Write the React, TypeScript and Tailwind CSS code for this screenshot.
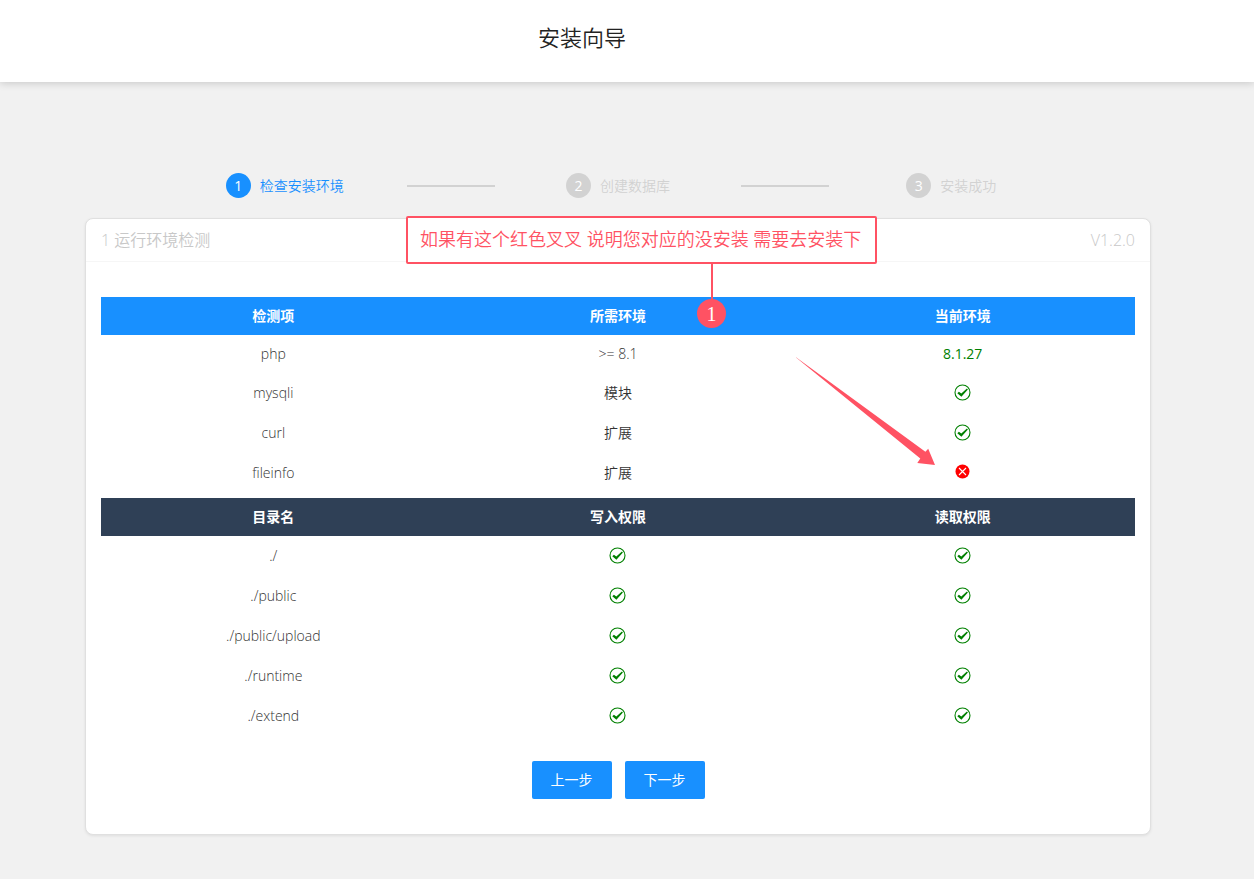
import { Fragment } from "react";
import type { ReactNode } from "react";
import clsx from "clsx";

interface EnvRow {
  name: string;
  required: string;
  current: string | boolean;
}

interface CheckTableProps {
  heads: string[];
  headClass: string;
  bodyClass?: string;
  rows: { key: string; cells: ReactNode[] }[];
}

const steps = ["检查安装环境", "创建数据库", "安装成功"];

const envRows: EnvRow[] = [
  { name: "php", required: ">= 8.1", current: "8.1.27" },
  { name: "mysqli", required: "模块", current: true },
  { name: "curl", required: "扩展", current: true },
  { name: "fileinfo", required: "扩展", current: false },
];

const dirs = ["./", "./public", "./public/upload", "./runtime", "./extend"];

function OkIcon() {
  return (
    <svg
      role="img"
      aria-label="ok"
      viewBox="0 0 18 18"
      className="mx-auto block h-[18px] w-[18px] text-[#008000]"
      fill="none"
      stroke="currentColor"
    >
      <circle cx="8.5" cy="8.5" r="7.5" strokeWidth="1.1" />
      <path d="M3.3 9.2 4.9 7.8 7.3 9.6 12.9 4.4 13.9 5.5 7.4 12.7Z" fill="currentColor" stroke="none" />
    </svg>
  );
}

function FailIcon() {
  return (
    <svg
      role="img"
      aria-label="fail"
      viewBox="0 0 18 18"
      className="mx-auto block h-[18px] w-[18px]"
    >
      <circle cx="8.5" cy="7.5" r="7" fill="#ff0000" />
      <path d="M5 4l7 7M12 4l-7 7" stroke="#fff" strokeWidth="1.1" />
    </svg>
  );
}

function StatusCell({ value }: { value: string | boolean }) {
  if (typeof value === "string") {
    return <span className="font-normal text-[#008000]">{value}</span>;
  }
  return value ? <OkIcon /> : <FailIcon />;
}

function CheckTable({ heads, headClass, bodyClass, rows }: CheckTableProps) {
  return (
    <table className="w-full table-fixed text-center text-sm text-[#333]">
      <thead>
        <tr className={clsx("h-[38px] text-white", headClass)}>
          {heads.map((head) => (
            <th key={head} className="p-0 font-bold">
              {head}
            </th>
          ))}
        </tr>
      </thead>
      <tbody className={bodyClass}>
        {rows.map((row) => (
          <tr key={row.key} className="h-10">
            {row.cells.map((cell, i) => (
              <td key={i} className="p-0 font-[350]">
                {cell}
              </td>
            ))}
          </tr>
        ))}
      </tbody>
    </table>
  );
}

function Steps({ active }: { active: number }) {
  return (
    <ol className="flex items-center px-[77px] text-sm">
      {steps.map((label, i) => (
        <Fragment key={label}>
          {i > 0 && <li aria-hidden className="h-0.5 w-[88px] bg-[#d2d2d2]" />}
          <li
            className={clsx(
              "flex flex-1 items-center justify-center gap-[9px] font-[350]",
              i === active ? "text-[#1890ff]" : "text-[#d2d2d2]"
            )}
          >
            <span
              className={clsx(
                "flex size-[25px] items-center justify-center rounded-full font-normal text-white",
                i === active ? "bg-[#1890ff]" : "bg-[#d2d2d2]"
              )}
            >
              {i + 1}
            </span>
            {label}
          </li>
        </Fragment>
      ))}
    </ol>
  );
}

function Annotation() {
  return (
    <>
      <p className="absolute -top-[3px] left-80 rounded-xs border-2 border-[#ff5263] bg-white pt-[7px] pr-[14px] pb-[9px] pl-3 text-lg leading-7 font-[350] whitespace-nowrap text-[#ff5263]">
        如果有这个红色叉叉 说明您对应的没安装 需要去安装下
      </p>
      <div className="absolute top-[45px] left-[611px] flex w-[29px] flex-col items-center">
        <span className="h-9 w-0.5 bg-[#ff5263]" />
        <span className="-mt-px flex size-[29px] items-center justify-center rounded-full bg-[#ff5263] font-['Liberation_Serif',serif] text-xl leading-none text-white">
          1
        </span>
      </div>
      <svg
        aria-hidden
        viewBox="0 0 140 110"
        className="absolute top-[138px] left-[710px] h-[110px] w-[140px]"
        fill="#ff5263"
      >
        <path d="M-.5 0 129.4 94.8 132.2 91.8 139 108 121.3 106 124.3 101.4Z" />
      </svg>
    </>
  );
}

export default function App() {
  return (
    <div className="min-h-screen bg-[#f1f1f1] font-['Open_Sans','Noto_Sans_CJK_SC',sans-serif]">
      <header className="flex h-[82px] justify-center bg-white pt-[21px] pr-[90px] shadow-[0_1px_8px_rgba(0,0,0,0.18)]">
        <h1 className="text-[22px] leading-8 font-[350] text-[#222]">安装向导</h1>
      </header>

      <main className="mr-[18px] px-[85px] pt-[91px] pb-11">
        <Steps active={0} />

        <section className="relative mt-5 rounded-lg border border-[#e0e0e0] bg-white shadow-[0_1px_3px_rgba(0,0,0,0.08)]">
          <div className="flex h-[43px] items-center justify-between border-b border-[#f6f6f6] px-[15px] text-base font-[350] text-[#c8c8c8]">
            <h2>1 运行环境检测</h2>
            <span>V1.2.0</span>
          </div>

          <div className="px-[15px] py-[35px]">
            <CheckTable
              heads={["检测项", "所需环境", "当前环境"]}
              headClass="bg-[#1890ff]"
              bodyClass="[&>tr:first-child]:h-[38px]"
              rows={envRows.map((row) => ({
                key: row.name,
                cells: [row.name, row.required, <StatusCell value={row.current} />],
              }))}
            />
            <div className="mt-[5px]">
              <CheckTable
                heads={["目录名", "写入权限", "读取权限"]}
                headClass="bg-[#2f4056]"
                rows={dirs.map((dir) => ({
                  key: dir,
                  cells: [dir, <OkIcon />, <OkIcon />],
                }))}
              />
            </div>

            <div className="mt-[25px] flex justify-center gap-[13px]">
              <button
                type="button"
                className="h-[38px] w-20 rounded-xs bg-[#1890ff] text-sm text-white hover:opacity-80"
              >
                上一步
              </button>
              <button
                type="button"
                className="h-[38px] w-20 rounded-xs bg-[#1890ff] text-sm text-white hover:opacity-80"
              >
                下一步
              </button>
            </div>
          </div>

          <Annotation />
        </section>
      </main>
    </div>
  );
}
